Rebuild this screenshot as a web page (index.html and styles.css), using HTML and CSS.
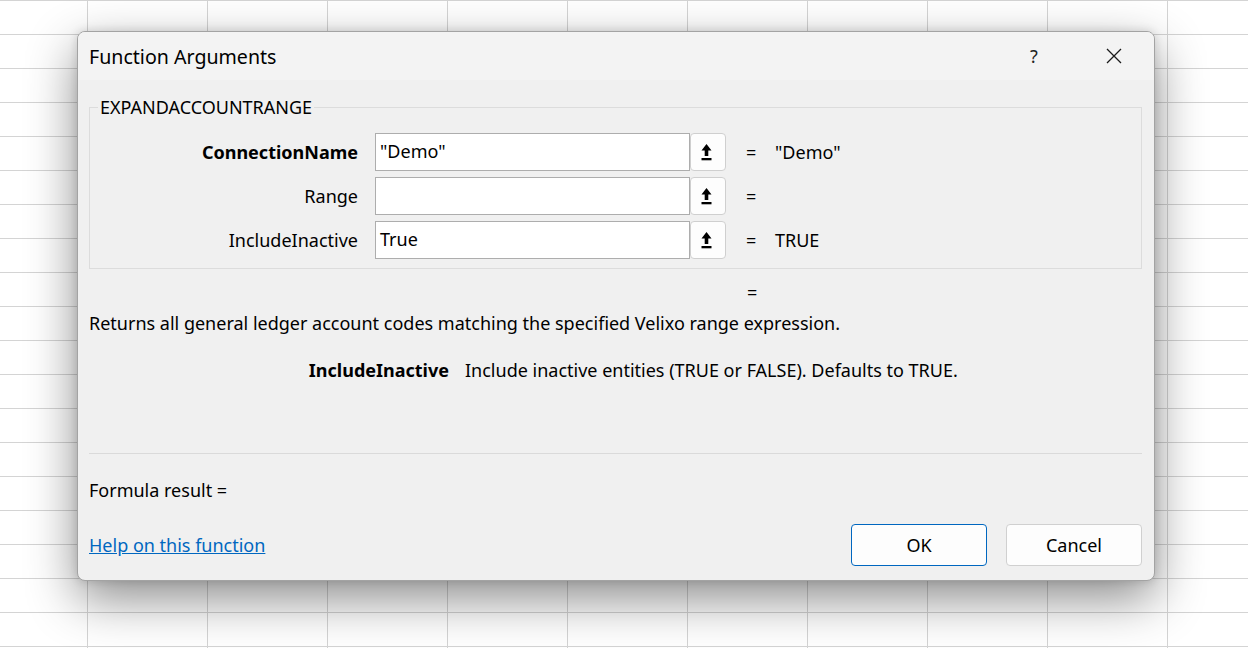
FILE: index.html
```html
<!DOCTYPE html>
<html lang="en">
<head>
    <meta charset="UTF-8">
    <title>Function Arguments</title>
    <link rel="stylesheet" href="styles.css">
</head>
<body>
    <div class="dialog">
        <div class="titlebar">
            <div class="title">Function Arguments</div>
            <div class="title-btn help">?</div>
            <div class="title-btn close">
                <svg width="16" height="16" viewBox="0 0 16 16"><path d="M1 1 L15 15 M15 1 L1 15" stroke="#1a1a1a" stroke-width="1.3" fill="none"/></svg>
            </div>
        </div>

        <div class="content">
            <fieldset class="args">
                <legend>EXPANDACCOUNTRANGE</legend>

                <div class="arg-row">
                    <div class="arg-label bold">ConnectionName</div>
                    <div class="arg-field">"Demo"</div>
                    <div class="pick-btn">
                        <svg width="11" height="17" viewBox="0 0 11 17"><path d="M5.5 0 L10.5 6.5 L7.3 6.5 L7.3 12 L3.7 12 L3.7 6.5 L0.5 6.5 Z" fill="#000"/><rect x="0.5" y="14" width="10" height="2.3" fill="#000"/></svg>
                    </div>
                    <div class="arg-eq">=</div>
                    <div class="arg-value">"Demo"</div>
                </div>

                <div class="arg-row">
                    <div class="arg-label">Range</div>
                    <div class="arg-field"></div>
                    <div class="pick-btn">
                        <svg width="11" height="17" viewBox="0 0 11 17"><path d="M5.5 0 L10.5 6.5 L7.3 6.5 L7.3 12 L3.7 12 L3.7 6.5 L0.5 6.5 Z" fill="#000"/><rect x="0.5" y="14" width="10" height="2.3" fill="#000"/></svg>
                    </div>
                    <div class="arg-eq">=</div>
                    <div class="arg-value"></div>
                </div>

                <div class="arg-row">
                    <div class="arg-label">IncludeInactive</div>
                    <div class="arg-field">True</div>
                    <div class="pick-btn">
                        <svg width="11" height="17" viewBox="0 0 11 17"><path d="M5.5 0 L10.5 6.5 L7.3 6.5 L7.3 12 L3.7 12 L3.7 6.5 L0.5 6.5 Z" fill="#000"/><rect x="0.5" y="14" width="10" height="2.3" fill="#000"/></svg>
                    </div>
                    <div class="arg-eq">=</div>
                    <div class="arg-value">TRUE</div>
                </div>
            </fieldset>

            <div class="result-eq">=</div>
            <div class="description">Returns all general ledger account codes matching the specified Velixo range expression.</div>

            <div class="arg-help">
                <div class="arg-help-name bold">IncludeInactive</div>
                <div class="arg-help-text">Include inactive entities (TRUE or FALSE). Defaults to TRUE.</div>
            </div>

            <div class="separator"></div>

            <div class="formula-result">Formula result =</div>

            <div class="footer">
                <a class="help-link" href="#">Help on this function</a>
                <div class="buttons">
                    <div class="btn primary">OK</div>
                    <div class="btn">Cancel</div>
                </div>
            </div>
        </div>
    </div>
</body>
</html>
```

FILE: styles.css
```css
html, body {
    margin: 0;
    height: 648px;
    overflow: hidden;
}

body {
    font-family: "Noto Sans", "Open Sans", sans-serif;
    font-size: 18px;
    color: #000;
    background-color: #fff;
    background-image:
        linear-gradient(to right, #d4d4d4 1px, transparent 1px),
        linear-gradient(to bottom, #d4d4d4 1px, transparent 1px);
    background-size: 120px 34px, 120px 34px;
    background-position: 87px 0, 0 0;
    padding: 31px 0 0 77px;
    box-sizing: border-box;
}

.bold {
    font-weight: bold;
}

.dialog {
    width: 1078px;
    height: 550px;
    box-sizing: border-box;
    background-color: #f0f0f0;
    border: 1px solid #a3a3a3;
    border-radius: 8px;
    box-shadow: 0 18px 50px rgba(0, 0, 0, 0.45), 0 0 10px rgba(0, 0, 0, 0.14);
    overflow: hidden;
}

.titlebar {
    height: 48px;
    background-color: #f3f3f3;
    display: flex;
    align-items: center;
}
.title {
    flex: 1;
    padding-left: 11px;
    font-size: 19.6px;
    line-height: 24px;
    padding-top: 2px;
}
.title-btn {
    width: 80px;
    height: 48px;
    display: flex;
    align-items: center;
    justify-content: center;
}
.help {
    font-size: 18px;
    color: #222;
}

.content {
    padding: 0 12px 0 11px;
}

.args {
    margin: 17px 0 0 0;
    padding: 16px 0 9px 0;
    border: 1px solid #dcdcdc;
    min-width: 0;
}
.args legend {
    margin-left: 8px;
    padding: 0 2px;
    line-height: 20px;
}

.arg-row {
    display: flex;
    align-items: center;
    height: 38px;
    margin-bottom: 6px;
}
.arg-row:last-child {
    margin-bottom: 0;
}
.arg-label {
    width: 268px;
    margin-right: 17px;
    text-align: right;
}
.arg-field {
    width: 315px;
    height: 38px;
    box-sizing: border-box;
    background-color: #fff;
    border: 1px solid #adadad;
    padding: 0 4px;
    line-height: 34px;
}
.pick-btn {
    width: 36px;
    height: 38px;
    box-sizing: border-box;
    background-color: #fdfdfd;
    border: 1px solid #cfcfcf;
    border-radius: 4px;
    display: flex;
    align-items: center;
    justify-content: center;
    padding-right: 4px;
}
.arg-eq {
    width: 10px;
    margin-left: 20px;
}
.arg-value {
    margin-left: 19px;
}

.result-eq {
    margin-top: 13px;
    padding-left: 658px;
    line-height: 20px;
}
.description {
    margin-top: 11px;
    line-height: 20px;
}

.arg-help {
    display: flex;
    margin-top: 27px;
    line-height: 20px;
}
.arg-help-name {
    width: 360px;
    margin-right: 16px;
    text-align: right;
}

.separator {
    border-top: 1px solid #dadada;
    margin-top: 73px;
}

.formula-result {
    margin-top: 26px;
    line-height: 20px;
}

.footer {
    display: flex;
    align-items: center;
    justify-content: space-between;
    margin-top: 24px;
}
.help-link {
    color: #0067c0;
    text-decoration: underline;
}
.buttons {
    display: flex;
    gap: 19px;
}
.btn {
    width: 136px;
    height: 42px;
    box-sizing: border-box;
    border: 1px solid #d0d0d0;
    border-radius: 4px;
    background-color: #fdfdfd;
    display: flex;
    align-items: center;
    justify-content: center;
}
.btn.primary {
    border-color: #0067c0;
}
```
